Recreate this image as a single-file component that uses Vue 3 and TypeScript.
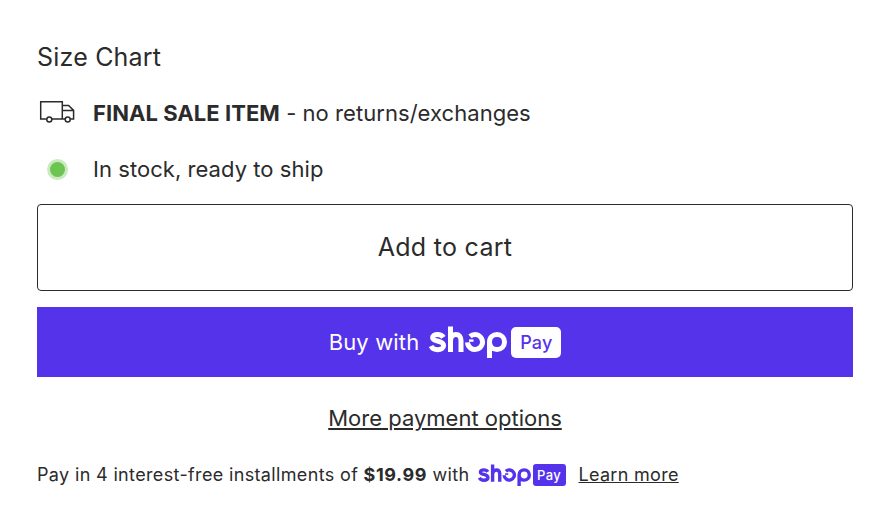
<script setup lang="ts">
const title = 'Size Chart'
</script>

<template>
  <main class="page">
    <svg width="0" height="0" class="defs" aria-hidden="true">
      <symbol id="shop-logo" viewBox="0 0 78 32">
        <g fill="none" stroke="currentColor">
          <path d="M14.4 11.4C13.2 9.4 11.2 8.4 8.6 8.4 5.6 8.4 3.6 9.7 3.6 11.8 3.6 16.2 14.6 13.8 14.6 19.6 14.6 22.2 12 23.7 8.6 23.7 5.6 23.7 3.2 22.4 2 20" stroke-width="5" />
          <path d="M21.5 0.5V26M21.5 15C21.5 10.8 24 8.6 27 8.6 30 8.6 32 10.8 32 14.6V26" stroke-width="5" />
          <path d="M41 10.4A7.5 7.5 0 1 1 38.5 16.4" stroke-width="5" />
          <path d="M40 14.6H44.5" stroke-width="2.4" />
          <path d="M60.5 32.6V16C60.5 11.4 63.8 8.5 68 8.5 72.4 8.5 75.5 11.8 75.5 16 75.5 20.2 72.4 23.5 68 23.5 63.8 23.5 60.5 20.6 60.5 16" stroke-width="5" />
        </g>
      </symbol>
    </svg>

    <h2 class="title">{{ title }}</h2>

    <div class="info-row sale">
      <span class="lead">
        <svg class="truck" width="36" height="24" viewBox="0 0 36 24" fill="none" stroke="#2b2b2b" stroke-width="1.5">
          <path d="M7.6 17.9H1.7V0.8H23.3V17.9H13M23.3 4.4H29.6L34.6 9.4V17.9H31.4M23.3 17.9H26M23.3 9.4H34.6" />
          <circle cx="10.3" cy="18.6" r="2.5" />
          <circle cx="28.7" cy="18.6" r="2.5" />
        </svg>
      </span>
      <p><strong>FINAL SALE ITEM</strong> - no returns/exchanges</p>
    </div>

    <div class="info-row stock">
      <span class="lead"><i class="dot"></i></span>
      <p>In stock, ready to ship</p>
    </div>

    <button class="cart" type="button"><span class="cart-label">Add to cart</span></button>

    <button class="buy" type="button">
      <span>Buy with</span>
      <svg class="buy-logo" width="78" height="32"><use href="#shop-logo" /></svg>
      <span class="pay-badge">Pay</span>
    </button>

    <a class="more" href="#">More payment options</a>

    <p class="installments">
      <span>Pay in 4 interest-free installments of <strong>$19.99</strong> with</span>
      <svg class="mini-logo" width="53" height="22"><use href="#shop-logo" /></svg>
      <span class="mini-badge">Pay</span>
      <a href="#">Learn more</a>
    </p>
  </main>
</template>

<style>
body {
  background: #fff;
}
</style>

<style scoped>
.page {
  box-sizing: border-box;
  width: 892px;
  height: 526px;
  padding: 42px 39px 0 37px;
  display: flex;
  flex-direction: column;
  font-family: Inter, "Liberation Sans", sans-serif;
  color: #2b2b2b;
}
.defs {
  position: absolute;
}
.title {
  margin: 0;
  font-size: 25px;
  line-height: 30px;
  font-weight: 400;
  letter-spacing: 0.2px;
}
p {
  margin: 0;
}
.info-row {
  display: flex;
  align-items: center;
  font-size: 22px;
  line-height: 28px;
  letter-spacing: 0.05px;
}
.sale {
  margin-top: 27px;
}
.stock {
  margin-top: 28px;
}
.lead {
  width: 56px;
  display: flex;
  align-items: center;
}
.truck {
  margin-left: 2px;
}
.dot {
  width: 15px;
  height: 15px;
  margin-left: 12.5px;
  border-radius: 50%;
  background: #6cc551;
  box-shadow: 0 0 0 3px #c9ebbf;
}
.cart {
  margin-top: 21px;
  height: 87px;
  padding: 0 0 2px;
  border: 1px solid #2b2b2b;
  border-radius: 4px;
  background: #fff;
  color: #2b2b2b;
  font: 400 25px Inter, "Liberation Sans", sans-serif;
  letter-spacing: 0.3px;
}
.buy {
  margin-top: 16px;
  height: 70px;
  border: 0;
  background: #5433eb;
  color: #fff;
  display: flex;
  align-items: center;
  justify-content: center;
  font: 400 22px Inter, "Liberation Sans", sans-serif;
  letter-spacing: 0.15px;
}
.buy-logo {
  margin-left: 10px;
}
.pay-badge {
  margin-left: 4px;
  width: 50px;
  height: 31px;
  border-radius: 5px;
  background: #fff;
  color: #5433eb;
  font-size: 18px;
  font-weight: 500;
  line-height: 31px;
}
.more {
  margin-top: 27px;
  align-self: center;
  color: #2b2b2b;
  font-size: 22px;
  line-height: 28px;
}
.installments {
  margin-top: 31px;
  display: flex;
  align-items: center;
  font-size: 18px;
  line-height: 24px;
  letter-spacing: 0.35px;
}
.installments strong {
  letter-spacing: 0.6px;
}
.mini-logo {
  margin-left: 8px;
  color: #5433eb;
}
.mini-badge {
  margin-left: 2px;
  width: 33px;
  height: 22px;
  border-radius: 3px;
  background: #5433eb;
  color: #fff;
  text-align: center;
  font-size: 13px;
  font-weight: 500;
  line-height: 22px;
}
.installments a {
  margin-left: 13px;
  color: #2b2b2b;
  letter-spacing: 0.3px;
}
</style>
